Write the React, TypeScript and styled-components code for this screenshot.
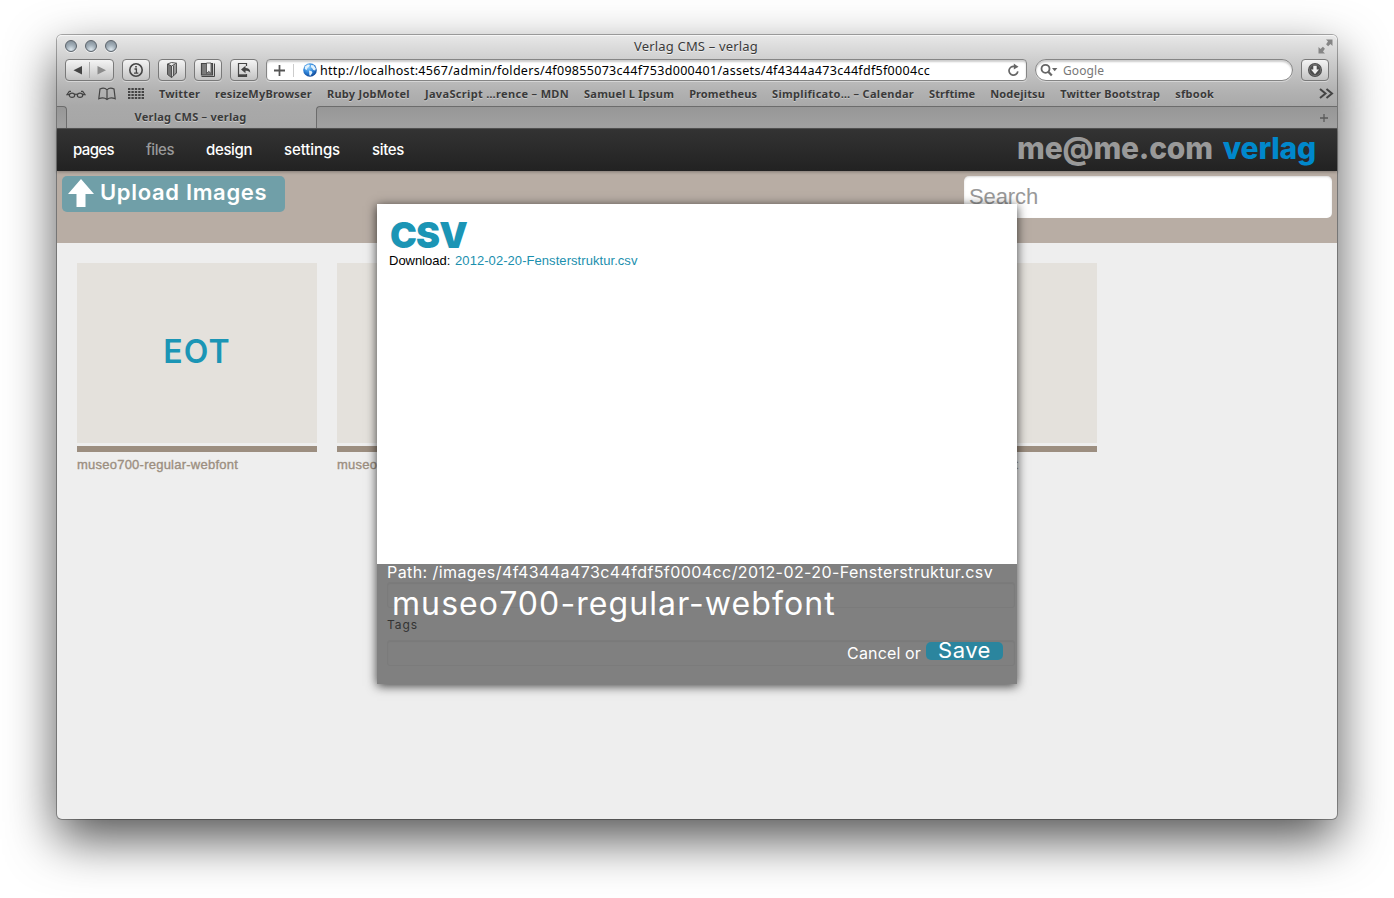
import React from 'react';
import styled, { createGlobalStyle, css } from 'styled-components';

const GlobalStyle = createGlobalStyle`
  body { margin: 0; background: #fff; }
  *, *::before, *::after { box-sizing: border-box; }
`;

const chromeFont = '"Noto Sans", "Open Sans", sans-serif';
const brandFont = 'Inter, "Open Sans", sans-serif';
const plainFont = '"Liberation Sans", Arial, sans-serif';

const Desktop = styled.main`
  width: 1394px;
  height: 898px;
  padding: 35px 57px 0;
  overflow: hidden;
`;

const Window = styled.div`
  position: relative;
  display: flex;
  flex-direction: column;
  width: 1280px;
  height: 784px;
  border-radius: 5px;
  background: #eee;
  box-shadow: 0 0 0 1px rgba(0, 0, 0, 0.3), 0 20px 50px rgba(0, 0, 0, 0.68);
`;

const Chrome = styled.header`
  display: flex;
  flex-direction: column;
  height: 94px;
  border-radius: 5px 5px 0 0;
  border-bottom: 1px solid #555;
  box-shadow: inset 0 1px 0 #f6f6f6;
  background: linear-gradient(#e8e8e8 0, #cdcdcd 26px, #b2b2b2 56px, #a9a9a9 71px, #a6a6a6 100%);
  font-family: ${chromeFont};
  color: #3a3a3a;
`;

const TitleBar = styled.div`
  display: grid;
  grid-template-columns: 1fr auto 1fr;
  align-items: center;
  height: 24px;
  padding: 0 4px 2px 8px;
`;

const Lights = styled.div`
  display: flex;
  gap: 8px;
`;

const Light = styled.span`
  width: 12px;
  height: 12px;
  border-radius: 50%;
  border: 1px solid #5b636b;
  background: radial-gradient(circle at 50% 85%, #dce6ed 0, #a3b0ba 45%, #7b8791 100%);
  box-shadow: 0 1px 0 rgba(255, 255, 255, 0.6);
`;

const WindowTitle = styled.span`
  padding-right: 6px;
  font-size: 13px;
  line-height: 22px;
  letter-spacing: 0.18px;
  text-shadow: 0 1px 0 rgba(255, 255, 255, 0.6);
`;

const Expand = styled.svg`
  justify-self: end;
`;

const Toolbar = styled.div`
  display: flex;
  gap: 8px;
  height: 22px;
  padding: 0 8px;
`;

const ToolButton = styled.span<{ $wide?: boolean }>`
  display: flex;
  align-items: center;
  justify-content: center;
  width: ${(p) => (p.$wide ? 49 : 28)}px;
  border: 1px solid #797979;
  border-radius: 4px;
  background: linear-gradient(#f4f4f4, #c3c3c3);
  box-shadow: 0 1px 0 rgba(255, 255, 255, 0.4);
`;

const field = css`
  display: flex;
  align-items: center;
  border: 1px solid #858585;
  background: #fff;
  box-shadow: inset 0 2px 2px rgba(0, 0, 0, 0.2), 0 1px 0 rgba(255, 255, 255, 0.4);
`;

const AddressField = styled.div`
  ${field}
  flex: 1;
  border-radius: 4px;
  padding: 0 6px 0 7px;
`;

const AddMark = styled.span`
  display: flex;
  align-items: center;
  width: 20px;
  height: 13px;
  margin-right: 9px;
  border-right: 1px solid #ccc;
`;

const Address = styled.span`
  flex: 1;
  padding-top: 2px;
  margin-left: 3px;
  font-size: 12.5px;
  line-height: 18px;
  letter-spacing: 0.3px;
  white-space: nowrap;
  color: #000;
`;

const SearchField = styled.div`
  ${field}
  width: 258px;
  border-radius: 11px;
  padding-left: 4px;
`;

const Engine = styled.span`
  margin-left: 5px;
  font-size: 12px;
  letter-spacing: 0.08px;
  color: #777;
`;

const Bookmarks = styled.div`
  display: flex;
  align-items: center;
  gap: 15px;
  height: 25px;
  padding: 0 3px 0 9px;
  > :last-child { margin-left: auto; }
`;

const BookmarkIcons = styled.span`
  display: flex;
  align-items: center;
  gap: 12px;
  width: 78px;
`;

const ChromeLabel = styled.span<{ $spacing: number }>`
  font-size: 11px;
  font-weight: 700;
  letter-spacing: ${(p) => p.$spacing}px;
  white-space: nowrap;
  text-shadow: 0 1px 0 rgba(255, 255, 255, 0.4);
`;

const TabStrip = styled.div`
  display: flex;
  justify-content: space-between;
  height: 22px;
  flex: none;
`;

const stripFill = css`
  border-top: 1px solid #6c6c6c;
  background: linear-gradient(#979797, #a1a1a1);
`;

const StripEdge = styled.span`
  ${stripFill}
  width: 10px;
  border-right: 1px solid #6c6c6c;
  border-radius: 0 4px 0 0;
`;

const StripRest = styled.span`
  ${stripFill}
  flex: 1;
  display: flex;
  align-items: center;
  justify-content: flex-end;
  padding-right: 9px;
  border-left: 1px solid #6c6c6c;
  border-radius: 4px 0 0 0;
`;

const Tab = styled.span`
  display: flex;
  align-items: center;
  justify-content: center;
  width: 249px;
  padding: 0 2px 1px 0;
`;

const NavBar = styled.nav`
  position: relative;
  display: flex;
  gap: 32px;
  height: 42px;
  padding: 0 21px 0 16px;
  background: linear-gradient(#333, #222);
  box-shadow: 0 1px 3px rgba(0, 0, 0, 0.3);
  font-family: ${brandFont};
`;

const NavItem = styled.span<{ $spacing: number; $current?: boolean }>`
  font-size: 15px;
  font-weight: 500;
  line-height: 41px;
  letter-spacing: ${(p) => p.$spacing}px;
  color: ${(p) => (p.$current ? '#999' : '#fff')};
`;

const Account = styled.span`
  display: flex;
  gap: 10px;
  margin-left: auto;
  font-size: 30px;
  font-weight: 800;
  line-height: 39px;
  letter-spacing: -0.2px;
  color: #999;
`;

const SiteName = styled.span`
  color: #0088cc;
`;

const ActionBar = styled.section`
  display: flex;
  justify-content: space-between;
  align-items: flex-start;
  height: 72px;
  padding: 5px;
  background: #b8ada4;
`;

const UploadButton = styled.span`
  display: flex;
  gap: 6px;
  width: 223px;
  height: 36px;
  padding: 3px 0 0 6px;
  border-radius: 5px;
  background: #709fa8;
  color: #fff;
`;

const UploadLabel = styled.span`
  margin-top: -2px;
  font: 600 22px/31px ${brandFont};
  letter-spacing: 0.67px;
`;

const AssetSearch = styled.div`
  width: 368px;
  height: 42px;
  padding-left: 5px;
  border-radius: 5px;
  background: #fff;
  box-shadow: inset 0 1px 2px rgba(0, 0, 0, 0.15);
  font: 22px/41px ${plainFont};
  letter-spacing: -0.1px;
  color: #999;
`;

const Assets = styled.section`
  display: flex;
  gap: 20px;
  padding: 20px;
`;

const Asset = styled.article`
  width: 240px;
`;

const Preview = styled.div`
  display: flex;
  align-items: center;
  justify-content: center;
  height: 180px;
  padding: 0 0 3px;
  background: #e4e1dc;
  font: 600 32px/40px ${brandFont};
  letter-spacing: 1.2px;
  color: #1b95b5;
`;

const AssetName = styled.div`
  margin-top: 3px;
  border-top: 6px solid #9c8e80;
  font: 13px/26px ${plainFont};
  letter-spacing: 0.235px;
  -webkit-text-stroke: 0.35px #9c8e80;
  color: #9c8e80;
`;

const Dialog = styled.div`
  position: absolute;
  left: 320px;
  top: 169px;
  width: 640px;
  height: 480px;
  background: #808080;
  box-shadow: 0 2px 10px rgba(0, 0, 0, 0.75);
`;

const DialogPreview = styled.div`
  height: 360px;
  padding: 12px;
  background: #fff;
  color: #000;
`;

const FileType = styled.h1`
  margin: 0 0 0 1px;
  font: 900 36px/38px ${brandFont};
  letter-spacing: -0.8px;
  color: #1b95b5;
`;

const Download = styled.p`
  margin: 0;
  font: 13px/14px ${plainFont};
  white-space: pre;
`;

const FileLink = styled.a`
  margin-left: 1px;
  letter-spacing: 0.06px;
  color: #1b8fae;
`;

const DialogForm = styled.div`
  padding: 0 2px 0 10px;
  font-family: ${brandFont};
  color: #fff;
`;

const FilePath = styled.div`
  height: 18px;
  font-size: 16px;
  line-height: 17px;
  letter-spacing: 0.42px;
  white-space: nowrap;
`;

const TextField = styled.div`
  height: 26px;
  padding-left: 4px;
  border: 1px solid #7b7b7b;
  border-radius: 3px;
  box-shadow: inset 0 1px 1px rgba(0, 0, 0, 0.05);
  font-size: 32px;
  line-height: 42px;
  letter-spacing: 1.09px;
`;

const FieldLabel = styled.div`
  margin: 10px 0 9px;
  font-size: 12px;
  line-height: 13px;
  letter-spacing: 0.95px;
  color: #333;
`;

const FormActions = styled.div`
  position: absolute;
  right: 14px;
  top: 438px;
  display: flex;
  gap: 5px;
  font-size: 16px;
  line-height: 22px;
  letter-spacing: 0.15px;
`;

const SaveButton = styled.span`
  width: 77px;
  height: 18px;
  border-radius: 5px;
  background: #2b859e;
  font-size: 22px;
  line-height: 16px;
  letter-spacing: 0.5px;
  text-align: center;
`;

const bookmarks: [string, number][] = [
  ['Twitter', 0.16],
  ['resizeMyBrowser', 0.21],
  ['Ruby JobMotel', 0.26],
  ['JavaScript …rence – MDN', 0.34],
  ['Samuel L Ipsum', 0.23],
  ['Prometheus', 0.11],
  ['Simplificato… – Calendar', 0.3],
  ['Strftime', 0.09],
  ['Nodejitsu', 0.18],
  ['Twitter Bootstrap', 0.17],
  ['sfbook', 0.28],
];

const navItems: [string, number][] = [
  ['pages', -0.62],
  ['files', -0.43],
  ['design', -0.38],
  ['settings', -0.11],
  ['sites', -0.34],
];

const PlusIcon = ({ size, color }: { size: number; color: string }) => (
  <svg width={size} height={size} viewBox="0 0 10 10" stroke={color} strokeWidth="1.6">
    <path d="M5 0v10M0 5h10" />
  </svg>
);

const ArrowsIcon = () => (
  <svg width="47" height="20" viewBox="0 0 47 20">
    <path d="M16 6v8.500L7.500 10.250z" fill="#444" />
    <path d="M31.500 6v8.500L40 10.250z" fill="#8c8c8c" />
    <path d="M23.500 2v16" stroke="#aaa" />
  </svg>
);

const InfoIcon = () => (
  <svg width="16" height="16" viewBox="0 0 16 16" fill="none" stroke="#454545">
    <circle cx="8" cy="8" r="6.200" strokeWidth="1.600" />
    <path d="M6.500 7h1.900v4M6 11.200h4.300" strokeWidth="1.300" />
    <path d="M7.200 4.700h1.600" strokeWidth="1.500" />
  </svg>
);

const BookIcon = () => (
  <svg width="14" height="18" viewBox="0 0 14 18" stroke="#454545" strokeWidth="0.9">
    <path d="M2.500 3l4 2v11.500l-4-3z" fill="#777" />
    <path d="M2.500 3l4-1.500 5 .7-5 2.800M6.500 16.500l2-1.500V4.500M8.500 14.500l1.500-1V3.500M10 13l1.500-.8V2.300" fill="none" />
  </svg>
);

const BookmarkIcon = () => (
  <svg width="16" height="18" viewBox="0 0 16 18">
    <path d="M1.500 2.500h11v11.500h-11z" fill="#7c7c7c" stroke="#454545" strokeWidth="1.200" />
    <path d="M14.500 2.500v13H1.500" fill="none" stroke="#454545" />
    <path d="M6.500 2h4.500v10.500L8.750 10.300 6.500 12.500z" fill="#eee" stroke="#454545" strokeWidth="0.8" />
  </svg>
);

const SendIcon = () => (
  <svg width="16" height="18" viewBox="0 0 16 18">
    <path d="M10.500 5V2.500h-8v13h8V13" fill="none" stroke="#454545" strokeWidth="1.200" />
    <path d="M2.500 13.300h8v2.200h-8z" fill="#454545" />
    <path d="M5 8.500l4.500-3.700v2.300c3 0 4.700 1.400 4.800 4.600-1-1.500-2.500-1.900-4.800-1.900v2.400z" fill="#454545" />
  </svg>
);

const GlobeIcon = () => (
  <svg width="14" height="14" viewBox="0 0 14 14">
    <defs>
      <radialGradient id="globe" cx=".4" cy=".3" r=".75">
        <stop offset="0" stopColor="#8fd0ff" />
        <stop offset=".55" stopColor="#2c82d8" />
        <stop offset="1" stopColor="#0c3e8c" />
      </radialGradient>
    </defs>
    <circle cx="7" cy="7" r="6.800" fill="url(#globe)" />
    <path d="M2 3.500L5 1.400l2 .7-1 1.700L4.500 5l-.7 2-2-1zM8 2l2.500.2 2.300 3-.5 2.300-2-.5L9 5l-1-.8zM6 7.500l2.800.8.600 1.500-2 3-1-.6z" fill="#e2f2fc" />
  </svg>
);

const ReloadIcon = () => (
  <svg width="13" height="14" viewBox="0 0 13 14">
    <path d="M10.800 8.300a4.400 4.400 0 1 1-3.500-4.900" fill="none" stroke="#666" strokeWidth="1.700" />
    <path d="M6.800.6l4.700 3.200-4.700 2.700z" fill="#666" />
  </svg>
);

const MagnifierIcon = () => (
  <svg width="18" height="14" viewBox="0 0 18 14">
    <circle cx="5.500" cy="5.800" r="4" fill="none" stroke="#666" strokeWidth="1.800" />
    <path d="M8.300 8.700l3.500 3.800" stroke="#666" strokeWidth="2.200" />
    <path d="M12 5h5.400l-2.700 3.200z" fill="#666" />
  </svg>
);

const DownloadIcon = () => (
  <svg width="16" height="16" viewBox="0 0 16 16">
    <circle cx="8" cy="8" r="7" fill="#4c4c4c" />
    <circle cx="8" cy="8" r="5.600" fill="none" stroke="#777" strokeWidth="0.8" />
    <path d="M6.300 3.800h3.400v3.700h2.300L8 12.200 4 7.500h2.300z" fill="#eee" />
  </svg>
);

const GlassesIcon = () => (
  <svg width="20" height="12" viewBox="0 0 20 12" fill="none" stroke="#444" strokeWidth="1.200">
    <ellipse cx="6" cy="7.200" rx="2.700" ry="2.100" />
    <ellipse cx="14" cy="7.200" rx="2.700" ry="2.100" />
    <path d="M8.700 6.600q1.300-.9 2.600 0M3.300 6.700H1L3.300 3.300h1.700M16.700 6.700H19L16.700 3.300H15" />
  </svg>
);

const OpenBookIcon = () => (
  <svg width="18" height="14" viewBox="0 0 18 14" fill="none" stroke="#444" strokeWidth="1.200">
    <path d="M9 2.800C7 .8 4.500.8 2 2L.8 11.800c3-1.200 6-1 8.200.6 2.200-1.600 5.200-1.800 8.200-.6L16 2C13.500.8 11 .8 9 2.800zM9 2.800v9.600" />
  </svg>
);

const GridIcon = () => (
  <svg width="16" height="12" viewBox="0 0 16 12" stroke="#444" strokeWidth="2">
    <path d="M0 1h16M0 4h16M0 7h16M0 10h16" strokeDasharray="2.400 1" />
  </svg>
);

const ExpandIcon = () => (
  <Expand width="15" height="15" viewBox="0 0 15 15" fill="#858585">
    <path d="M8 .5h6.500V7l-2-2-2.400 2.300-2-2L10 2.500zM.5 8l2 2 2.400-2.300 2 2L5 12.500l2 2H.5z" />
  </Expand>
);

const ChevronsIcon = () => (
  <svg width="15" height="11" viewBox="0 0 15 11" fill="none" stroke="#444" strokeWidth="2">
    <path d="M1 1l5.500 4.500L1 10M7.500 1L13 5.500 7.500 10" />
  </svg>
);

const UploadIcon = () => (
  <svg width="26" height="28" viewBox="0 0 26 28" fill="#fff">
    <path d="M13 0l13 15h-8.500v13h-9V15H0z" />
  </svg>
);

export default function App() {
  return (
    <Desktop>
      <GlobalStyle />
      <Window>
        <Chrome>
          <TitleBar>
            <Lights>
              <Light />
              <Light />
              <Light />
            </Lights>
            <WindowTitle>Verlag CMS – verlag</WindowTitle>
            <ExpandIcon />
          </TitleBar>
          <Toolbar>
            <ToolButton $wide><ArrowsIcon /></ToolButton>
            <ToolButton><InfoIcon /></ToolButton>
            <ToolButton><BookIcon /></ToolButton>
            <ToolButton><BookmarkIcon /></ToolButton>
            <ToolButton><SendIcon /></ToolButton>
            <AddressField>
              <AddMark><PlusIcon size={11} color="#555" /></AddMark>
              <GlobeIcon />
              <Address>http://localhost:4567/admin/folders/4f09855073c44f753d000401/assets/4f4344a473c44fdf5f0004cc</Address>
              <ReloadIcon />
            </AddressField>
            <SearchField>
              <MagnifierIcon />
              <Engine>Google</Engine>
            </SearchField>
            <ToolButton><DownloadIcon /></ToolButton>
          </Toolbar>
          <Bookmarks>
            <BookmarkIcons>
              <GlassesIcon />
              <OpenBookIcon />
              <GridIcon />
            </BookmarkIcons>
            {bookmarks.map(([label, spacing]) => (
              <ChromeLabel key={label} $spacing={spacing}>{label}</ChromeLabel>
            ))}
            <ChevronsIcon />
          </Bookmarks>
          <TabStrip>
            <StripEdge />
            <Tab><ChromeLabel $spacing={0.24}>Verlag CMS – verlag</ChromeLabel></Tab>
            <StripRest><PlusIcon size={8} color="#5a5a5a" /></StripRest>
          </TabStrip>
        </Chrome>

        <NavBar>
          {navItems.map(([label, spacing]) => (
            <NavItem key={label} $spacing={spacing} $current={label === 'files'}>{label}</NavItem>
          ))}
          <Account>
            <span>me@me.com</span>
            <SiteName>verlag</SiteName>
          </Account>
        </NavBar>

        <ActionBar>
          <UploadButton>
            <UploadIcon />
            <UploadLabel>Upload Images</UploadLabel>
          </UploadButton>
          <AssetSearch>Search</AssetSearch>
        </ActionBar>

        <Assets>
          {['EOT', '', '', ''].map((type, i) => (
            <Asset key={i}>
              <Preview>{type}</Preview>
              <AssetName>museo700-regular-webfont</AssetName>
            </Asset>
          ))}
        </Assets>

        <Dialog>
          <DialogPreview>
            <FileType>CSV</FileType>
            <Download>Download: <FileLink>2012-02-20-Fensterstruktur.csv</FileLink></Download>
          </DialogPreview>
          <DialogForm>
            <FilePath>Path: /images/4f4344a473c44fdf5f0004cc/2012-02-20-Fensterstruktur.csv</FilePath>
            <TextField>museo700-regular-webfont</TextField>
            <FieldLabel>Tags</FieldLabel>
            <TextField />
            <FormActions>
              <span>Cancel or</span>
              <SaveButton>Save</SaveButton>
            </FormActions>
          </DialogForm>
        </Dialog>
      </Window>
    </Desktop>
  );
}
